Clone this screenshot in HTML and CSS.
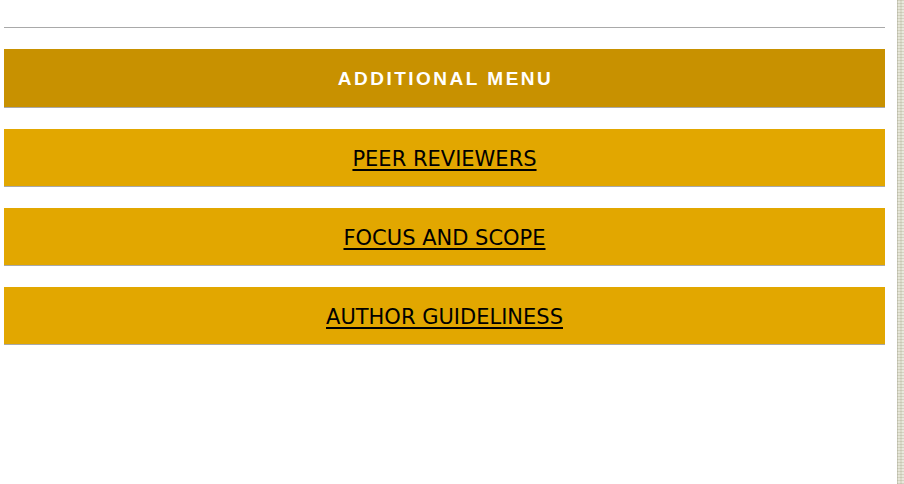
FILE: index.html
```html
<!DOCTYPE html>
<html>
<head>
<meta charset="utf-8">
<link rel="stylesheet" href="styles.css">
</head>
<body>
<div class="page">
  <div class="main">
    <div class="rule"></div>
    <div class="menu-head">ADDITIONAL MENU</div>
    <a class="menu-item" href="#">PEER REVIEWERS</a>
    <a class="menu-item" href="#">FOCUS AND SCOPE</a>
    <a class="menu-item" href="#">AUTHOR GUIDELINESS</a>
  </div>
  <div class="strip"></div>
</div>
</body>
</html>
```
FILE: styles.css
```css
html, body {
  margin: 0;
  padding: 0;
  background: #ffffff;
}
.page {
  display: flex;
  width: 904px;
  height: 484px;
  overflow: hidden;
}
.main {
  width: 881px;
  padding: 27px 12px 0 4px;
  display: flex;
  flex-direction: column;
}
.rule {
  height: 1px;
  background: #a9a9a9;
  margin-bottom: 21px;
}
.menu-head {
  height: 58px;
  border-bottom: 1px solid #a9a9a9;
  background: #c89100;
  color: #ffffff;
  font-family: "Liberation Sans", Arial, sans-serif;
  font-weight: bold;
  font-size: 19px;
  letter-spacing: 2.5px;
  padding-left: 2px;
  box-sizing: border-box;
  height: 59px;
  padding-top: 1px;
  display: flex;
  align-items: center;
  justify-content: center;
  margin-bottom: 21px;
}
.menu-item {
  box-sizing: border-box;
  height: 58px;
  padding-top: 2px;
  border-bottom: 1px solid #a9a9a9;
  background: #e2a700;
  color: #000000;
  font-family: "DejaVu Sans", Verdana, sans-serif;
  font-size: 21px;
  text-decoration: underline;
  text-decoration-thickness: 2px;
  text-underline-offset: 3px;
  display: flex;
  align-items: center;
  justify-content: center;
  margin-bottom: 21px;
}
.strip {
  width: 7px;
  flex: none;
  background-color: #e3e3d3;
  background-image:
    repeating-linear-gradient(0deg, rgba(150,150,120,0.25) 0 1px, transparent 1px 3px),
    linear-gradient(90deg, #c9c9b8 0 1px, #e6e6d8 1px 3px, #d9d9c8 3px 5px, #e8e8dc 5px);
}
```
